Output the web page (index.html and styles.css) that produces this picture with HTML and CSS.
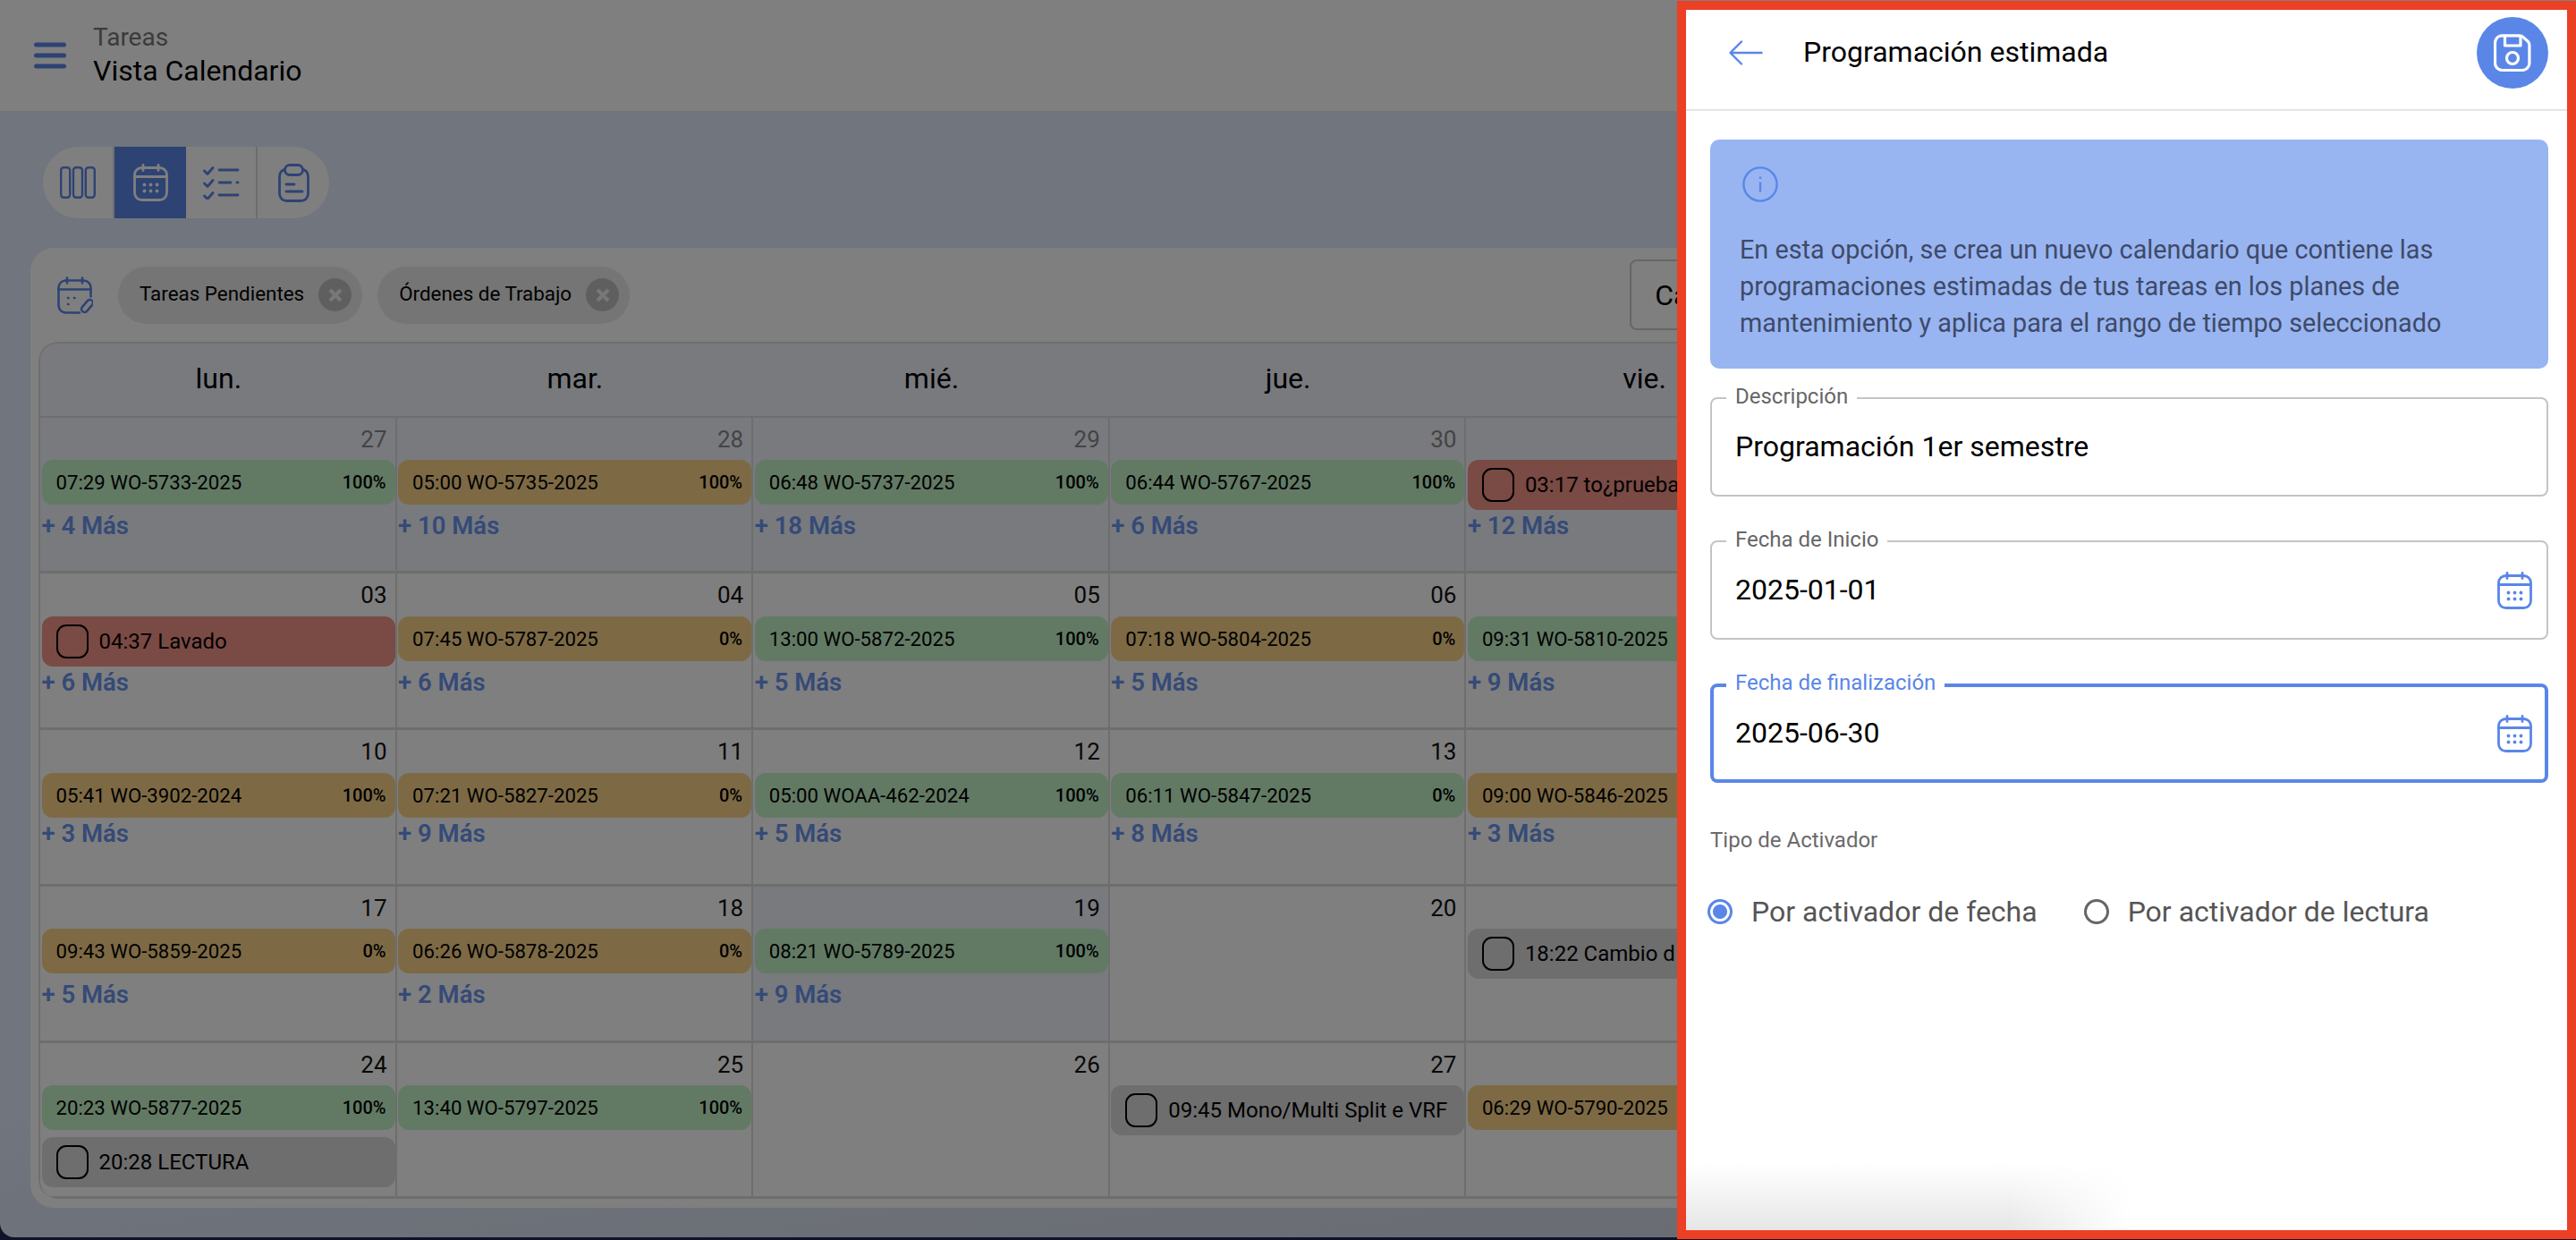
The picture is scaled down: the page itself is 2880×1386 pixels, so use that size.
FILE: index.html
```html
<!DOCTYPE html>

<html>

<head>
    <title>Tareas - Vista Calendario</title>
    <link rel="stylesheet" href="styles.css">
</head>

<body>
    <svg class="defs" width="0" height="0">
        <symbol id="calendar" viewBox="0 0 39 42">
            <rect x="1.5" y="4.5" width="36" height="36" rx="8" fill="none" stroke="currentColor" stroke-width="2.8" />
            <path d="M1.5 14.5h36M11 1.5v6M28 1.5v6" fill="none" stroke="currentColor" stroke-width="2.8" stroke-linecap="round" />
            <g fill="currentColor">
                <circle cx="12.5" cy="23.5" r="1.9" />
                <circle cx="19.5" cy="23.5" r="1.9" />
                <circle cx="26.5" cy="23.5" r="1.9" />
                <circle cx="12.5" cy="30.5" r="1.9" />
                <circle cx="19.5" cy="30.5" r="1.9" />
                <circle cx="26.5" cy="30.5" r="1.9" />
            </g>
        </symbol>
        <symbol id="chipX" viewBox="0 0 16 16">
            <path d="M2 2l12 12M14 2L2 14" fill="none" stroke="currentColor" stroke-width="4" />
        </symbol>
    </svg>

    <div class="page">
        <header class="topBar">
            <svg class="menuIcon" width="36" height="30" viewBox="0 0 36 30">
                <path d="M2.5 3h31M2.5 15h31M2.5 27h31" stroke="currentColor" stroke-width="5" stroke-linecap="round" />
            </svg>
            <div class="topTitles">
                <div class="topSection">Tareas</div>
                <div class="topView">Vista Calendario</div>
            </div>
        </header>

        <div class="viewToggle">
            <button class="toggleBtn toggleDivided">
                <svg width="40" height="36" viewBox="0 0 40 36" fill="none" stroke="currentColor" stroke-width="2.4">
                    <rect x="1.2" y="1.2" width="10" height="33.6" rx="3" />
                    <rect x="15" y="1.2" width="10" height="33.6" rx="3" />
                    <rect x="28.8" y="1.2" width="10" height="33.6" rx="3" />
                </svg>
            </button>
            <button class="toggleBtn toggleActive">
                <svg width="39" height="42"><use href="#calendar" /></svg>
            </button>
            <button class="toggleBtn toggleDivided">
                <svg width="41" height="38" viewBox="0 0 41 38" fill="none" stroke="currentColor" stroke-width="2.8" stroke-linecap="round" stroke-linejoin="round">
                    <path d="M1.5 6l3.5 3.5 6-7M1.5 20l3.5 3.5 6-7M1.5 34l3.5 3.5 6-7" />
                    <path d="M18 5h21M18 19h13M38 19h1M18 33h21" />
                </svg>
            </button>
            <button class="toggleBtn">
                <svg width="35" height="43" viewBox="0 0 35 43" fill="none" stroke="currentColor" stroke-width="2.8" stroke-linecap="round">
                    <rect x="1.5" y="6" width="32" height="35.5" rx="8" />
                    <rect class="capFill" x="7.5" y="1.5" width="20" height="11" rx="5.5" />
                    <path d="M9 23h9M9 31h18" />
                </svg>
            </button>
        </div>

        <section class="calCard">
            <div class="filterRow">
                <svg class="filterIcon" width="40" height="42" viewBox="0 0 40 42" fill="none" stroke="currentColor" stroke-width="2.6" stroke-linecap="round" stroke-linejoin="round">
                    <path d="M25 40.5H9.5a8 8 0 0 1-8-8v-20a8 8 0 0 1 8-8h20a8 8 0 0 1 8 8v10" />
                    <path d="M1.5 14.5h36M11 1.5v6M28 1.5v6" />
                    <path d="M12 24h.5M19 24h.5M12 31h.5" />
                    <rect x="-3.5" y="-8" width="7" height="16" rx="3.5" transform="translate(33.5 33) rotate(40)" />
                </svg>
                <div class="chip">Tareas Pendientes<span class="chipClose"><svg width="16" height="16"><use href="#chipX" /></svg></span></div>
                <div class="chip">Órdenes de Trabajo<span class="chipClose"><svg width="16" height="16"><use href="#chipX" /></svg></span></div>
                <button class="calBtn">Ca</button>
            </div>

            <div class="calGrid">
                <div class="dayHead">lun.</div>
                <div class="dayHead">mar.</div>
                <div class="dayHead">mié.</div>
                <div class="dayHead">jue.</div>
                <div class="dayHead">vie.</div>
                <div class="dayHead">sáb.</div>
                <div class="dayHead">dom.</div>

                <div class="cell tinted"><div class="dayNum otherMonth">27</div><div class="events"><div class="event green"><span>07:29 WO-5733-2025</span><b>100%</b></div></div><a class="more">+ 4 Más</a></div>
                <div class="cell tinted"><div class="dayNum otherMonth">28</div><div class="events"><div class="event orange"><span>05:00 WO-5735-2025</span><b>100%</b></div></div><a class="more">+ 10 Más</a></div>
                <div class="cell tinted"><div class="dayNum otherMonth">29</div><div class="events"><div class="event green"><span>06:48 WO-5737-2025</span><b>100%</b></div></div><a class="more">+ 18 Más</a></div>
                <div class="cell tinted"><div class="dayNum otherMonth">30</div><div class="events"><div class="event green"><span>06:44 WO-5767-2025</span><b>100%</b></div></div><a class="more">+ 6 Más</a></div>
                <div class="cell tinted lastCol"><div class="events noNum"><div class="event red check"><i></i><span>03:17 to¿prueba</span></div></div><a class="more">+ 12 Más</a></div>

                <div class="cell"><div class="dayNum">03</div><div class="events"><div class="event red check"><i></i><span>04:37 Lavado</span></div></div><a class="more">+ 6 Más</a></div>
                <div class="cell"><div class="dayNum">04</div><div class="events"><div class="event orange"><span>07:45 WO-5787-2025</span><b>0%</b></div></div><a class="more">+ 6 Más</a></div>
                <div class="cell"><div class="dayNum">05</div><div class="events"><div class="event green"><span>13:00 WO-5872-2025</span><b>100%</b></div></div><a class="more">+ 5 Más</a></div>
                <div class="cell"><div class="dayNum">06</div><div class="events"><div class="event orange"><span>07:18 WO-5804-2025</span><b>0%</b></div></div><a class="more">+ 5 Más</a></div>
                <div class="cell lastCol"><div class="events noNum"><div class="event green"><span>09:31 WO-5810-2025</span></div></div><a class="more">+ 9 Más</a></div>

                <div class="cell shortRow"><div class="dayNum">10</div><div class="events"><div class="event orange"><span>05:41 WO-3902-2024</span><b>100%</b></div></div><a class="more">+ 3 Más</a></div>
                <div class="cell shortRow"><div class="dayNum">11</div><div class="events"><div class="event orange"><span>07:21 WO-5827-2025</span><b>0%</b></div></div><a class="more">+ 9 Más</a></div>
                <div class="cell shortRow"><div class="dayNum">12</div><div class="events"><div class="event green"><span>05:00 WOAA-462-2024</span><b>100%</b></div></div><a class="more">+ 5 Más</a></div>
                <div class="cell shortRow"><div class="dayNum">13</div><div class="events"><div class="event green"><span>06:11 WO-5847-2025</span><b>0%</b></div></div><a class="more">+ 8 Más</a></div>
                <div class="cell shortRow lastCol"><div class="events noNum"><div class="event orange"><span>09:00 WO-5846-2025</span></div></div><a class="more">+ 3 Más</a></div>

                <div class="cell"><div class="dayNum">17</div><div class="events"><div class="event orange"><span>09:43 WO-5859-2025</span><b>0%</b></div></div><a class="more">+ 5 Más</a></div>
                <div class="cell"><div class="dayNum">18</div><div class="events"><div class="event orange"><span>06:26 WO-5878-2025</span><b>0%</b></div></div><a class="more">+ 2 Más</a></div>
                <div class="cell tinted"><div class="dayNum">19</div><div class="events"><div class="event green"><span>08:21 WO-5789-2025</span><b>100%</b></div></div><a class="more">+ 9 Más</a></div>
                <div class="cell"><div class="dayNum">20</div></div>
                <div class="cell lastCol"><div class="events noNum"><div class="event gray check"><i></i><span>18:22 Cambio d</span></div></div></div>

                <div class="cell lastRow"><div class="dayNum">24</div><div class="events"><div class="event green"><span>20:23 WO-5877-2025</span><b>100%</b></div><div class="event gray check"><i></i><span>20:28 LECTURA</span></div></div></div>
                <div class="cell lastRow"><div class="dayNum">25</div><div class="events"><div class="event green"><span>13:40 WO-5797-2025</span><b>100%</b></div></div></div>
                <div class="cell lastRow"><div class="dayNum">26</div></div>
                <div class="cell lastRow"><div class="dayNum">27</div><div class="events"><div class="event gray check"><i></i><span>09:45 Mono/Multi Split e VRF</span></div></div></div>
                <div class="cell lastRow lastCol"><div class="events noNum"><div class="event orange"><span>06:29 WO-5790-2025</span></div></div></div>
            </div>
        </section>
    </div>

    <div class="backdrop"></div>

    <aside class="panel">
        <div class="panelHead">
            <svg class="backIcon" width="38" height="28" viewBox="0 0 38 28" fill="none" stroke="currentColor" stroke-width="2.4" stroke-linecap="round" stroke-linejoin="round">
                <path d="M36.5 14H2M14 1.5L1.5 14 14 26.5" />
            </svg>
            <h2 class="panelTitle">Programación estimada</h2>
            <button class="saveBtn">
                <svg width="42" height="42" viewBox="0 0 42 42" fill="none" stroke="currentColor" stroke-width="3.2" stroke-linejoin="round">
                    <path d="M9.5 1.8h19.5q2 0 3.5 1.3l5.7 5.2q1.7 1.6 1.7 3.7v20.5a8 8 0 0 1-8 8h-22.400a8 8 0 0 1-8-8v-22.700a8 8 0 0 1 8-8z" />
                    <path d="M12.500 2v11h17.500v-11" />
                    <circle cx="21" cy="27" r="6.500" />
                </svg>
            </button>
        </div>

        <div class="panelBody">
            <div class="infoBox">
                <svg class="infoIcon" width="40" height="40" viewBox="0 0 40 40" fill="none" stroke="currentColor" stroke-width="2.4">
                    <circle cx="20" cy="20" r="18.6" />
                    <path d="M20 17.5v11" />
                    <path d="M20 11.5v2.4" stroke-width="2.6" />
                </svg>
                <p class="infoText">En esta opción, se crea un nuevo calendario que contiene las programaciones estimadas de tus tareas en los planes de mantenimiento y aplica para el rango de tiempo seleccionado</p>
            </div>

            <div class="field">
                <label class="fieldLabel">Descripción</label>
                <span class="fieldValue">Programación 1er semestre</span>
            </div>
            <div class="field">
                <label class="fieldLabel">Fecha de Inicio</label>
                <span class="fieldValue">2025-01-01</span>
                <svg class="fieldIcon" width="39" height="42"><use href="#calendar" /></svg>
            </div>
            <div class="field fieldFocus">
                <label class="fieldLabel">Fecha de finalización</label>
                <span class="fieldValue">2025-06-30</span>
                <svg class="fieldIcon" width="39" height="42"><use href="#calendar" /></svg>
            </div>

            <div class="groupLabel">Tipo de Activador</div>
            <div class="radioRow">
                <span class="radio radioOn"></span><span class="radioText">Por activador de fecha</span>
                <span class="radio"></span><span class="radioText">Por activador de lectura</span>
            </div>
        </div>
    </aside>
</body>

</html>
```

FILE: styles.css
```css
* {
    box-sizing: border-box;
}

html,
body {
    margin: 0;
    height: 1386px;
    overflow: hidden;
}

body {
    position: relative;
    background-color: #20264f;
    color: #000;
    font-family: Roboto, "Liberation Sans", sans-serif;
}

.defs {
    position: absolute;
}

button {
    font-family: inherit;
    cursor: pointer;
}

.page {
    display: flex;
    flex-direction: column;
    width: 2880px;
    height: 1383px;
    border-radius: 0 0 0 16px;
    background: linear-gradient(172deg, #e0eafc 70%, #cfd3dd 100%);
    overflow: hidden;
}

/* top bar */
.topBar {
    display: flex;
    align-items: center;
    flex: none;
    height: 124px;
    padding-left: 38px;
    gap: 30px;
    background-color: #fff;
}

.menuIcon {
    color: #5a86e8;
}

.topSection {
    font-size: 28px;
    line-height: 34px;
    color: #777;
}

.topView {
    font-size: 32px;
    line-height: 40px;
}

/* view buttons */
.viewToggle {
    display: flex;
    flex: none;
    align-self: flex-start;
    height: 80px;
    margin: 40px 0 33px 48px;
    border-radius: 40px;
    background-color: #fff;
    overflow: hidden;
}

.toggleBtn {
    display: flex;
    align-items: center;
    justify-content: center;
    width: 80px;
    padding: 0;
    border: 0;
    background: none;
    color: #5a86e8;
}

.toggleActive {
    background-color: #5a86e8;
    color: #fff;
}

.toggleDivided {
    border-right: 2px solid #ddd;
}

.capFill {
    fill: #fff;
}

/* calendar card */
.calCard {
    flex: none;
    width: 2812px;
    height: 1073px;
    margin-left: 34px;
    padding: 0 10px 11px 9px;
    border-radius: 26px;
    background-color: #fff;
}

.filterRow {
    display: flex;
    align-items: center;
    height: 105px;
    padding-left: 21px;
}

.filterIcon {
    color: #5a86e8;
    margin-right: 28px;
}

.chip {
    display: flex;
    align-items: center;
    height: 64px;
    padding: 0 12px 4px 24px;
    margin-right: 17px;
    border-radius: 32px;
    background-color: #eaeaea;
    font-size: 22.4px;
}

.chipClose {
    display: flex;
    align-items: center;
    justify-content: center;
    width: 37px;
    height: 37px;
    margin: 4px 0 0 16px;
    border-radius: 50%;
    background-color: #bebebe;
    color: #f0f0f0;
}

.calBtn {
    width: 80px;
    height: 79px;
    margin-left: 1101px;
    padding: 0 0 0 26px;
    border: 2px solid #ccc;
    border-radius: 8px;
    background: none;
    font-size: 32px;
    color: #000;
    text-align: left;
}

.calGrid {
    display: grid;
    grid-template-columns: repeat(7, 398.6px);
    grid-auto-rows: 174.8px;
    grid-template-rows: 82.5px;
    border-left: 2px solid #ddd;
    border-top: 2px solid #ddd;
    border-radius: 22px 0 0 22px;
    overflow: hidden;
}

.dayHead {
    display: flex;
    align-items: center;
    justify-content: center;
    padding-bottom: 2px;
    background-color: #f0f4fc;
    border-bottom: 2px solid #ddd;
    font-size: 32px;
}

.cell {
    min-width: 0;
    border-right: 2px solid #ddd;
    border-bottom: 3px solid #ddd;
    background-color: #fff;
}

.tinted {
    background-color: #f0f4fc;
}

.lastCol {
    grid-column: 5 / span 3;
}

.dayNum {
    height: 47.500px;
    padding-right: 9px;
    font-size: 26px;
    line-height: 48px;
    text-align: right;
    color: #111;
}

.otherMonth {
    color: #888;
}

.events {
    display: flex;
    flex-direction: column;
    gap: 8px;
    min-height: 56px;
}

.noNum {
    margin-top: 47.500px;
}

.shortRow .events {
    min-height: 50px;
}

.event {
    display: flex;
    align-items: center;
    justify-content: space-between;
    flex: none;
    width: 395px;
    height: 50px;
    margin-left: 1.500px;
    padding: 0 10px 0 16px;
    border-radius: 12px;
    font-size: 22.2px;
    white-space: nowrap;
    overflow: hidden;
}

.event b {
    font-size: 20px;
    font-weight: 500;
}

.event span {
    overflow: hidden;
}

.check {
    justify-content: flex-start;
    height: 56px;
    font-size: 24px;
}

.check i {
    flex: none;
    width: 36px;
    height: 38px;
    margin-right: 12px;
    border: 2.5px solid #000;
    border-radius: 11px;
}

.green {
    background-color: #c4f4c8;
}

.orange {
    background-color: #fad48a;
}

.red {
    background-color: #f49488;
}

.gray {
    background-color: #dcdcdc;
}

.more {
    display: block;
    margin-left: 1.500px;
    font-size: 27.500px;
    font-weight: 600;
    line-height: 36px;
    color: #6a94ee;
}

/* dim layer under the side panel */
.backdrop {
    position: absolute;
    top: 0;
    right: 0;
    left: 0;
    bottom: 0;
    background-color: rgba(0, 0, 0, .5);
}

/* side panel */
.panel {
    position: absolute;
    top: 1px;
    left: 1875px;
    display: flex;
    flex-direction: column;
    width: 1005px;
    height: 1384px;
    border: 10px solid #ec4024;
    background-color: #fff;
}

.panel::after {
    content: "";
    position: absolute;
    left: 0;
    bottom: 0;
    width: 500px;
    height: 75px;
    background: linear-gradient(to top, #e6e6e6, #fff);
    -webkit-mask-image: linear-gradient(to right, #000 72%, transparent);
    mask-image: linear-gradient(to right, #000 72%, transparent);
}

.panelHead {
    display: flex;
    align-items: flex-start;
    flex: none;
    height: 113px;
    padding: 8px 21px 0 48px;
    border-bottom: 2px solid #e5e5e5;
}

.backIcon {
    margin: 26px 45px 0 0;
    color: #5a86e8;
}

.panelTitle {
    flex: 1;
    margin: -1px 0 0;
    font-size: 32px;
    font-weight: 400;
    line-height: 80px;
}

.saveBtn {
    display: flex;
    align-items: center;
    justify-content: center;
    width: 80px;
    height: 80px;
    padding: 0;
    border: 0;
    border-radius: 50%;
    background-color: #5a86e8;
    color: #fff;
}

.panelBody {
    padding: 32px 21px 0 27px;
}

.infoBox {
    height: 256px;
    padding: 30px 33px 0;
    border-radius: 10px;
    background-color: #98b5f2;
}

.infoIcon {
    display: block;
    margin-left: 3px;
    color: #5a86e8;
}

.infoText {
    margin: 33px 0 0;
    font-size: 28.8px;
    line-height: 41px;
    color: #3f4a68;
}

.field {
    position: relative;
    display: flex;
    align-items: center;
    justify-content: space-between;
    height: 111px;
    margin-top: 49px;
    padding: 0 16px 0 26px;
    border: 2px solid #c4c4c4;
    border-radius: 8px;
}

.infoBox + .field {
    margin-top: 32px;
}

.fieldLabel {
    position: absolute;
    top: -17px;
    left: 16px;
    padding: 0 10px;
    background-color: #fff;
    font-size: 24px;
    line-height: 28px;
    color: #666;
}

.fieldValue {
    margin-bottom: 2px;
    font-size: 32px;
}

.fieldIcon {
    color: #5a86e8;
}

.fieldFocus {
    padding: 0 14px 0 24px;
    border: 4px solid #5a86e8;
}

.fieldFocus .fieldLabel {
    top: -19px;
    left: 14px;
    color: #5a86e8;
}

.groupLabel {
    margin-top: 50px;
    font-size: 24px;
    line-height: 28px;
    color: #6a6a6a;
}

.radioRow {
    display: flex;
    align-items: center;
    height: 40px;
    margin: 46px 0 0 -3px;
    font-size: 32px;
    color: #555;
}

.radio {
    flex: none;
    width: 28px;
    height: 28px;
    margin-right: 21px;
    border: 3px solid #666;
    border-radius: 50%;
}

.radioOn {
    border-color: #5a86e8;
    background: radial-gradient(circle, #5a86e8 7.500px, #fff 8.500px);
}

.radioText {
    margin-right: 52px;
}
```
